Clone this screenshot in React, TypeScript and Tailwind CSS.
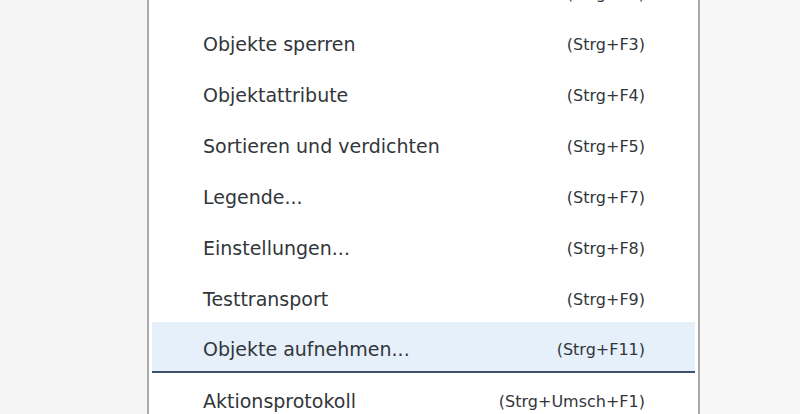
const items = [
  { label: "Aktualisieren", shortcut: "(Strg+F2)" },
  { label: "Objekte sperren", shortcut: "(Strg+F3)" },
  { label: "Objektattribute", shortcut: "(Strg+F4)" },
  { label: "Sortieren und verdichten", shortcut: "(Strg+F5)" },
  { label: "Legende...", shortcut: "(Strg+F7)" },
  { label: "Einstellungen...", shortcut: "(Strg+F8)" },
  { label: "Testtransport", shortcut: "(Strg+F9)" },
  { label: "Objekte aufnehmen...", shortcut: "(Strg+F11)", active: true },
  { label: "Aktionsprotokoll", shortcut: "(Strg+Umsch+F1)" },
];

export default function App() {
  return (
    <div
      className="flex h-[414px] w-[800px] overflow-hidden bg-[#f5f5f5] text-[#32363a]"
      style={{ fontFamily: "'DejaVu Sans', sans-serif" }}
    >
      <div className="w-[147px] shrink-0" />

      {/* Menu */}
      <div className="w-[553px] shrink-0 border-x-2 border-[#a9a9a9] bg-white px-[3px]">
        <ul className="-mt-[35px]">
          {items.map((item) => (
            <li
              key={item.label}
              className={`flex h-[51px] items-center justify-between pt-[6px] pl-[51px] pr-[50px] ${
                item.active ? "border-b-2 border-[#3e5368] bg-[#e5f0fa]" : ""
              }`}
            >
              <span className="text-[19px]">{item.label}</span>
              <span className="text-[16px]">{item.shortcut}</span>
            </li>
          ))}
        </ul>
      </div>

      <div className="flex-1 bg-[#f7f7f7]" />
    </div>
  );
}
